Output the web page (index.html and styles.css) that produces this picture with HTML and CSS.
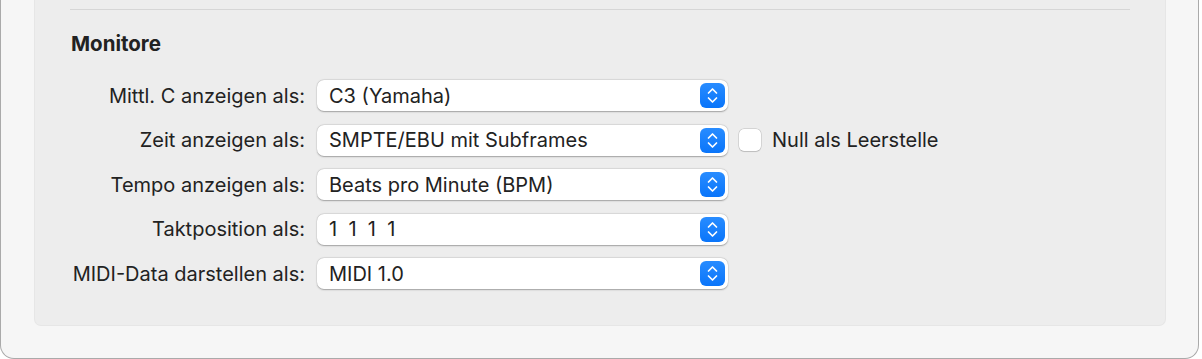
FILE: index.html
```html
<!DOCTYPE html>
<html>
<head>
  <title>Monitore</title>
  <meta name="viewport" content="width=device-width, initial-scale=1">
  <link rel="stylesheet" href="styles.css">
</head>
<body>

  <div class="window">
    <div class="panel">
      <div class="separator"></div>
      <p class="section-title">Monitore</p>

      <div class="form">
        <label class="form-label">Mittl. C anzeigen als:</label>
        <div class="form-field">
          <div class="popup">
            <span class="popup-value">C3 (Yamaha)</span>
            <span class="stepper">
              <svg width="13" height="19" viewBox="0 0 13 19"><path d="M2.5 7 L6.5 3 L10.5 7 M2.5 12 L6.5 16 L10.5 12" fill="none" stroke="white" stroke-width="1.7" stroke-linecap="round" stroke-linejoin="round"/></svg>
            </span>
          </div>
        </div>

        <label class="form-label">Zeit anzeigen als:</label>
        <div class="form-field">
          <div class="popup">
            <span class="popup-value">SMPTE/EBU mit Subframes</span>
            <span class="stepper">
              <svg width="13" height="19" viewBox="0 0 13 19"><path d="M2.5 7 L6.5 3 L10.5 7 M2.5 12 L6.5 16 L10.5 12" fill="none" stroke="white" stroke-width="1.7" stroke-linecap="round" stroke-linejoin="round"/></svg>
            </span>
          </div>
          <span class="checkbox"></span>
          <span class="checkbox-label">Null als Leerstelle</span>
        </div>

        <label class="form-label">Tempo anzeigen als:</label>
        <div class="form-field">
          <div class="popup">
            <span class="popup-value">Beats pro Minute (BPM)</span>
            <span class="stepper">
              <svg width="13" height="19" viewBox="0 0 13 19"><path d="M2.5 7 L6.5 3 L10.5 7 M2.5 12 L6.5 16 L10.5 12" fill="none" stroke="white" stroke-width="1.7" stroke-linecap="round" stroke-linejoin="round"/></svg>
            </span>
          </div>
        </div>

        <label class="form-label">Taktposition als:</label>
        <div class="form-field">
          <div class="popup">
            <span class="popup-value">1&nbsp;&nbsp;1&nbsp;&nbsp;1&nbsp;&nbsp;1</span>
            <span class="stepper">
              <svg width="13" height="19" viewBox="0 0 13 19"><path d="M2.5 7 L6.5 3 L10.5 7 M2.5 12 L6.5 16 L10.5 12" fill="none" stroke="white" stroke-width="1.7" stroke-linecap="round" stroke-linejoin="round"/></svg>
            </span>
          </div>
        </div>

        <label class="form-label">MIDI-Data darstellen als:</label>
        <div class="form-field">
          <div class="popup">
            <span class="popup-value">MIDI 1.0</span>
            <span class="stepper">
              <svg width="13" height="19" viewBox="0 0 13 19"><path d="M2.5 7 L6.5 3 L10.5 7 M2.5 12 L6.5 16 L10.5 12" fill="none" stroke="white" stroke-width="1.7" stroke-linecap="round" stroke-linejoin="round"/></svg>
            </span>
          </div>
        </div>
      </div>
    </div>
  </div>

</body>
</html>
```

FILE: styles.css
```css
body {
  margin: 0;
  background-color: white;
  color: rgb(34, 34, 34);
  font-family: Inter, "Noto Sans", sans-serif;
  font-size: 20px;
}

.window {
  width: 1199px;
  height: 359px;
  box-sizing: border-box;
  background-color: rgb(246, 246, 246);
  border: 1px solid rgb(170, 170, 170);
  border-top: none;
  border-radius: 0 0 14px 14px;
  padding: 0 32px 32px 33px;
}

.panel {
  height: 100%;
  box-sizing: border-box;
  background-color: rgb(237, 237, 237);
  border: 1px solid rgb(230, 230, 230);
  border-top: none;
  border-radius: 0 0 7px 7px;
  padding: 9px 35px 0 35px;
}

.separator {
  height: 1px;
  background-color: rgb(214, 214, 214);
}

.section-title {
  font-weight: bold;
  font-size: 20.5px;
  margin: 22px 0 0 1px;
  line-height: 24px;
}

.form {
  display: grid;
  grid-template-columns: 235px auto;
  column-gap: 12px;
  row-gap: 13.5px;
  margin-top: 24px;
}

.form-label {
  text-align: right;
  align-self: center;
  white-space: nowrap;
}

.form-field {
  display: flex;
  align-items: center;
}

.popup {
  width: 411px;
  height: 31px;
  box-sizing: border-box;
  background-color: white;
  border-radius: 7px;
  box-shadow: 0 0.5px 1.5px rgba(0, 0, 0, 0.3), 0 0 0 0.5px rgba(0, 0, 0, 0.06);
  display: flex;
  align-items: center;
  justify-content: space-between;
  padding: 0 3px 0 12px;
}

.stepper {
  width: 25px;
  height: 25px;
  border-radius: 6px;
  background: linear-gradient(rgb(40, 140, 255), rgb(10, 117, 250));
  display: flex;
  justify-content: center;
  align-items: center;
}

.checkbox {
  width: 22px;
  height: 22px;
  box-sizing: border-box;
  margin-left: 11px;
  background-color: white;
  border-radius: 5px;
  box-shadow: 0 0 0 0.5px rgba(0, 0, 0, 0.18), 0 0.5px 1px rgba(0, 0, 0, 0.12);
}

.checkbox-label {
  margin-left: 11px;
}
```
